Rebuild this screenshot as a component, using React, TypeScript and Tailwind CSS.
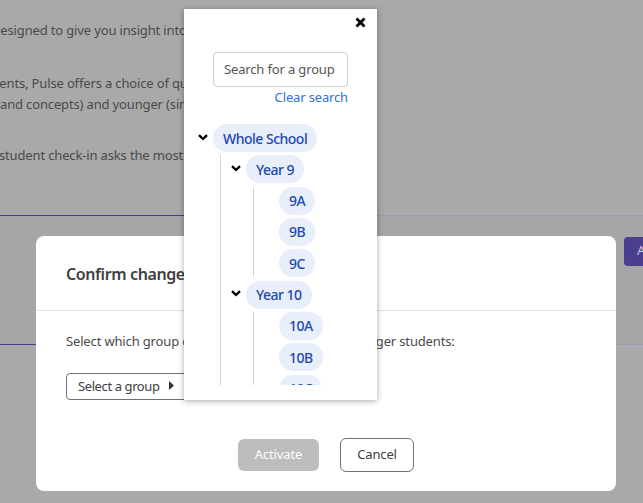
import React from "react";

const font = { fontFamily: '"Noto Sans", sans-serif' };

function Chevron() {
  return (
    <svg width="10" height="7" viewBox="0 0 10 7" className="block">
      <path d="M1 1.2 L5 5 L9 1.2" fill="none" stroke="#000" strokeWidth="2.3" />
    </svg>
  );
}

function Row({ label, open }: { label: string; open?: boolean }) {
  return (
    <div className="flex items-center">
      <div className="w-4 flex justify-center pr-[4px] pb-[2px]">{open ? <Chevron /> : null}</div>
      <div className="h-7 flex items-center rounded-full bg-[#e8eefa] px-[10px] text-[14px] tracking-[-0.5px] text-[#2148b0] font-medium">
        {label}
      </div>
    </div>
  );
}

function Group({ items }: { items: string[] }) {
  return (
    <div className="ml-[23px] border-l border-[#d4d4d4] pl-[9px] flex flex-col gap-[3.33px] mt-[3.33px]">
      {items.map((i) => (
        <Row key={i} label={i} />
      ))}
    </div>
  );
}

function Rule() {
  return (
    <div className="flex h-px">
      <div className="w-[200px] bg-[#4a3f8f]" />
      <div className="flex-1 bg-[#9d9ab0]" />
    </div>
  );
}

export default function App() {
  return (
    <div className="relative w-[643px] h-[503px] overflow-hidden bg-[#a9a9a9] text-[13px] tracking-[-0.15px] text-[#4a4a4a] whitespace-nowrap" style={font}>
      <div className="flex flex-col pt-[21px]">
        <p className="-ml-[9px] leading-[18px]">Designed to give you insight into</p>
        <p className="-ml-[27px] mt-[34px] leading-[21px]">students, Pulse offers a choice of questions</p>
        <p className="leading-[21px]">and concepts) and younger (simpler</p>
        <p className="-ml-[1px] mt-[30px] leading-[21px]">student check-in asks the most</p>
        <div className="mt-[49px] h-[130px] bg-[#a6a5a8] flex flex-col">
          <Rule />
          <div className="flex-1 flex justify-end pt-[21px]">
            <div className="w-[19px] h-[29px] rounded-l-[4px] bg-[#4a3f8f] pl-[13px] pt-[4px] text-white/70">A</div>
          </div>
          <Rule />
        </div>
      </div>

      <div className="absolute left-[36px] top-[236px] w-[580px] h-[255px] rounded-[8px] bg-white">
        <div className="h-[75px] border-b border-[#e2e2e2] pl-[30px] pt-[25px] text-[16px] font-semibold tracking-[-0.4px] leading-[26px] text-[#404040]">
          Confirm changes
        </div>
        <div className="pl-[30px] pt-[20px] leading-[20px] text-[#4a4a4a]">
          Select which group could receive questions for younger students:
        </div>
        <div className="ml-[30px] mt-[22px] w-[150px] h-[27px] rounded-[4px] border border-[#707070] flex items-center pl-[11px] gap-[9px] tracking-[-0.4px] text-[#404040]">
          Select a group
          <svg width="5" height="9" viewBox="0 0 5 9" className="mb-[2px]"><path d="M0 0 L5 4.5 L0 9 Z" fill="#333" /></svg>
        </div>
        <div className="flex gap-[21px] pl-[202px] mt-[39px]">
          <div className="w-[81px] h-[32px] rounded-[6px] bg-[#bdbdbd] text-white flex items-center justify-center">Activate</div>
          <div className="w-[74px] h-[34px] -mt-[1px] rounded-[6px] border border-[#707070] bg-white text-[#404040] flex items-center justify-center">Cancel</div>
        </div>
      </div>

      <div className="absolute left-[184px] top-[9px] w-[193px] h-[391px] bg-white shadow-[0_1px_6px_rgba(0,0,0,0.35)] flex flex-col">
        <svg className="absolute right-[11px] top-[8px]" width="11" height="11" viewBox="0 0 11 11">
          <path d="M1.5 1.5 L9.5 9.5 M9.5 1.5 L1.5 9.5" stroke="#000" strokeWidth="2.8" />
        </svg>
        <div className="ml-[29px] mt-[43px] w-[135px] h-[35px] rounded-[4px] border border-[#cfcfcf] flex items-center pl-[10px] text-[#555]">
          Search for a group
        </div>
        <div className="ml-[29px] w-[135px] text-right text-[#2f6fe0] leading-[20px]">Clear search</div>
        <div className="mt-[17px] ml-[13px] h-[261px] overflow-hidden">
          <Row label="Whole School" open />
          <div className="ml-[23px] border-l border-[#d4d4d4] pl-[9px] mt-[3.33px]">
            <Row label="Year 9" open />
            <Group items={["9A", "9B", "9C"]} />
            <div className="mt-[3.33px]"><Row label="Year 10" open /></div>
            <Group items={["10A", "10B", "10C"]} />
          </div>
        </div>
      </div>
    </div>
  );
}
